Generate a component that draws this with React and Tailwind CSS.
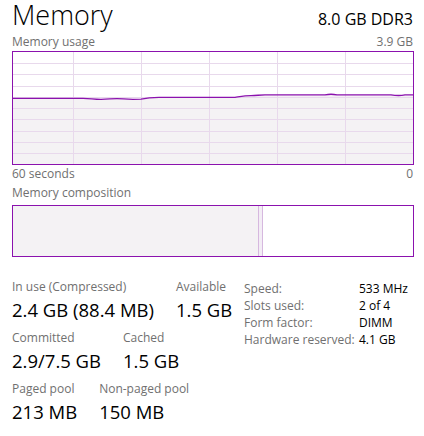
import React from "react";

const font = { fontFamily: '"Segoe UI", "Open Sans", "Noto Sans", sans-serif' };

function UsageGraph() {
  const vx = [60.5, 128.5, 196.5, 264.5, 332.5];
  const hy = [11.5, 22.5, 34.5, 45.5, 56.5, 67.5, 79.5, 90.5, 101.5];
  const line =
    "M0,46.3 L70,46.3 C78,46.3 80,47.3 88,47.3 C95,47.3 98,46.6 104,46.6 C110,46.6 112,47.3 120,47.3 L128,47.1 C133,46 138,45.4 146,45.4 L222,45.4 C228,44.5 232,43.7 238,43.7 C244,43.7 246,42.8 252,42.8 L312,42.8 C316,42.1 320,42.1 324,42.8 L378,42.8 C383,43.7 388,43.7 392,42.9 L400,42.8";
  return (
    <svg width="400" height="112" viewBox="0 0 400 112" className="block">
      <rect x="0" y="0" width="400" height="112" fill="#ffffff" />
      <path d={line + " L400,112 L0,112 Z"} fill="#f4f2f4" />
      {vx.map((x) => (
        <line key={"v" + x} x1={x} y1="0" x2={x} y2="112" stroke="#e8d9ec" strokeWidth="1" />
      ))}
      {hy.map((y) => (
        <line key={"h" + y} x1="0" y1={y} x2="400" y2={y} stroke="#e8d9ec" strokeWidth="1" />
      ))}
      <path d={line} fill="none" stroke="#8b12ae" strokeWidth="1.3" />
    </svg>
  );
}

function Stat({ label, value }) {
  return (
    <div className="flex flex-col">
      <div className="text-[12px] leading-[16px] text-[#707070] whitespace-nowrap">{label}</div>
      <div className="mt-[3px] text-[18.5px] leading-[24px] text-black whitespace-nowrap">{value}</div>
    </div>
  );
}

export default function App() {
  const props = [
    ["Speed:", "533 MHz"],
    ["Slots used:", "2 of 4"],
    ["Form factor:", "DIMM"],
    ["Hardware reserved:", "4.1 GB"],
  ];
  return (
    <div className="w-[424px] h-[436px] bg-white px-3 overflow-hidden" style={font}>
      <div className="flex justify-between items-baseline h-[34px]">
        <div className="text-[27px] leading-[30px] font-light text-black">Memory</div>
        <div className="text-[16px] leading-[20px] text-black mr-[-1px]">8.0 GB DDR3</div>
      </div>
      <div className="flex justify-between text-[12px] leading-[16px] text-[#707070]">
        <span>Memory usage</span>
        <span className="mr-[-1px]">3.9 GB</span>
      </div>
      <div className="border border-[#8b12ae] w-[402px] h-[114px] mt-[1px]">
        <UsageGraph />
      </div>
      <div className="flex justify-between text-[12px] leading-[16px] text-[#707070] mt-[1px]">
        <span>60 seconds</span>
        <span className="mr-[-1px]">0</span>
      </div>
      <div className="mt-[3px] text-[12px] leading-[16px] text-[#707070]">Memory composition</div>
      <div className="mt-[4px] border border-[#8b12ae] w-[402px] h-[52px] flex">
        <div className="w-[245px] bg-[#f4f2f4]" />
        <div className="w-[5px] border-x border-[#d6b8df] bg-[#f3edf5]" />
        <div className="flex-1 bg-white" />
      </div>
      <div className="flex items-start mt-[22px]">
        <div className="w-[232px] flex flex-col gap-[8px]">
          <div className="flex gap-[22px]">
            <Stat label="In use (Compressed)" value="2.4 GB (88.4 MB)" />
            <Stat label="Available" value="1.5 GB" />
          </div>
          <div className="flex gap-[22px]">
            <Stat label="Committed" value="2.9/7.5 GB" />
            <Stat label="Cached" value="1.5 GB" />
          </div>
          <div className="flex gap-[22px]">
            <Stat label="Paged pool" value="213 MB" />
            <Stat label="Non-paged pool" value="150 MB" />
          </div>
        </div>
        <div className="grid grid-cols-[115px_auto] content-start text-[12px] leading-[17px] mt-[1px]">
          {props.map(([k, v]) => (
            <React.Fragment key={k}>
              <div className="text-[#707070] whitespace-nowrap">{k}</div>
              <div className="text-black whitespace-nowrap">{v}</div>
            </React.Fragment>
          ))}
        </div>
      </div>
    </div>
  );
}
